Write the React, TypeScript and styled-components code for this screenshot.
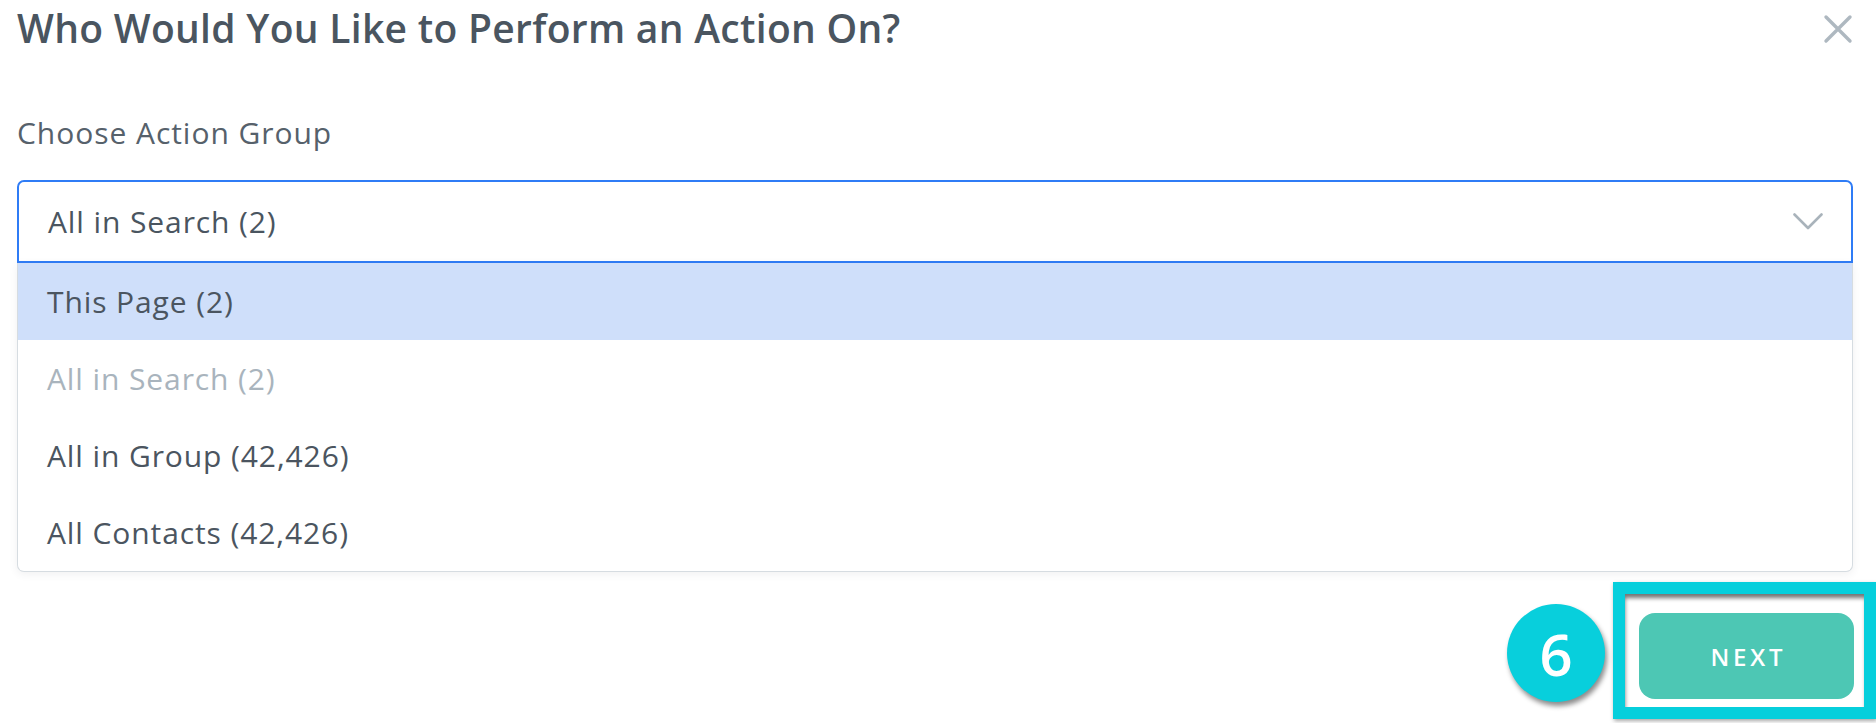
import React from "react";
import styled, { createGlobalStyle } from "styled-components";

const Global = createGlobalStyle`
  html, body { margin: 0; padding: 0; background: #ffffff; }
  body { font-family: "Open Sans", Lato, sans-serif; -webkit-font-smoothing: antialiased; }
  * { box-sizing: border-box; }
`;

const Modal = styled.div`
  width: 1876px;
  height: 723px;
  overflow: hidden;
  padding: 4px 23px 0 17px;
  display: flex;
  flex-direction: column;
`;

const Header = styled.div`
  display: flex;
  align-items: flex-start;
  justify-content: space-between;
  height: 62px;
`;

const Title = styled.h1`
  margin: 0;
  font-size: 39px;
  line-height: 48px;
  font-weight: 600;
  color: #4a5560;
  letter-spacing: 0.3px;
`;

const CloseButton = styled.button`
  border: none;
  background: transparent;
  padding: 0;
  margin: 10px 0 0 0;
  width: 30px;
  height: 30px;
  cursor: pointer;
  display: flex;
`;

const Label = styled.div`
  font-size: 30px;
  line-height: 34px;
  color: #56616b;
  margin-top: 50px;
  height: 34px;
  letter-spacing: 0.95px;
`;

const Field = styled.div`
  margin-top: 30px;
  display: flex;
  flex-direction: column;
`;

const SelectBox = styled.div`
  height: 83px;
  border: 2px solid #2f7cf6;
  border-radius: 7px 7px 0 0;
  display: flex;
  align-items: center;
  justify-content: space-between;
  padding: 0 28px 0 29px;
  font-size: 30px;
  color: #4a5560;
  letter-spacing: 0.9px;
`;

const Menu = styled.div`
  border: 1.5px solid #d6dce1;
  border-top: none;
  border-radius: 0 0 7px 7px;
  box-shadow: 0 2px 8px rgba(60, 70, 80, 0.08);
  display: flex;
  flex-direction: column;
  background: #fff;
`;

const Option = styled.div<{ $active?: boolean; $disabled?: boolean }>`
  height: 77px;
  display: flex;
  align-items: center;
  padding-left: 29px;
  font-size: 30px;
  letter-spacing: 0.9px;
  background: ${(p) => (p.$active ? "#cfdffa" : "transparent")};
  color: ${(p) => (p.$disabled ? "#a9b4bd" : "#4b5560")};
`;

const Footer = styled.div`
  margin-top: 10px;
  margin-right: -23px;
  display: flex;
  justify-content: flex-end;
  align-items: flex-start;
  gap: 8px;
`;

const StepBadge = styled.div`
  margin-top: 22px;
  width: 98px;
  height: 98px;
  border-radius: 50%;
  background: #08cfdc;
  box-shadow: 2px 4px 5px rgba(0, 0, 0, 0.45);
  color: #fff;
  display: flex;
  align-items: center;
  justify-content: center;
  font-size: 58px;
  font-weight: 600;
  font-family: "Open Sans", Lato, sans-serif;
`;

const HighlightFrame = styled.div`
  width: 263px;
  height: 137px;
  border: 12px solid #06cfdc;
  padding: 7px 10px 8px 14px;
  box-shadow: inset 1px 5px 4px -1px rgba(0, 0, 0, 0.55), 1px 2px 4px rgba(0, 0, 0, 0.35);
  display: flex;
  align-items: flex-end;
`;

const NextButton = styled.button`
  width: 215px;
  height: 86px;
  border: none;
  border-radius: 16px;
  background: #4dc7b4;
  color: #fff;
  font-family: "Open Sans", Lato, sans-serif;
  font-size: 24px;
  font-weight: 600;
  letter-spacing: 3.8px;
  text-indent: 3.8px;
  cursor: pointer;
`;

export default function App() {
  return (
    <>
      <Global />
      <Modal>
        <Header>
          <Title>Who Would You Like to Perform an Action On?</Title>
          <CloseButton aria-label="Close">
            <svg width="30" height="30" viewBox="0 0 30 30">
              <path d="M3 3 L27 27 M27 3 L3 27" stroke="#aeb8c0" strokeWidth="3.4" strokeLinecap="round" />
            </svg>
          </CloseButton>
        </Header>
        <Label>Choose Action Group</Label>
        <Field>
          <SelectBox>
            <span>All in Search (2)</span>
            <svg width="30" height="17" viewBox="0 0 30 17">
              <polyline points="1.5,1.5 15,15 28.5,1.5" fill="none" stroke="#a9b3bb" strokeWidth="2.6" strokeLinecap="round" strokeLinejoin="round" />
            </svg>
          </SelectBox>
          <Menu>
            <Option $active>This Page (2)</Option>
            <Option $disabled>All in Search (2)</Option>
            <Option>All in Group (42,426)</Option>
            <Option>All Contacts (42,426)</Option>
          </Menu>
        </Field>
        <Footer>
          <StepBadge>6</StepBadge>
          <HighlightFrame>
            <NextButton>NEXT</NextButton>
          </HighlightFrame>
        </Footer>
      </Modal>
    </>
  );
}
